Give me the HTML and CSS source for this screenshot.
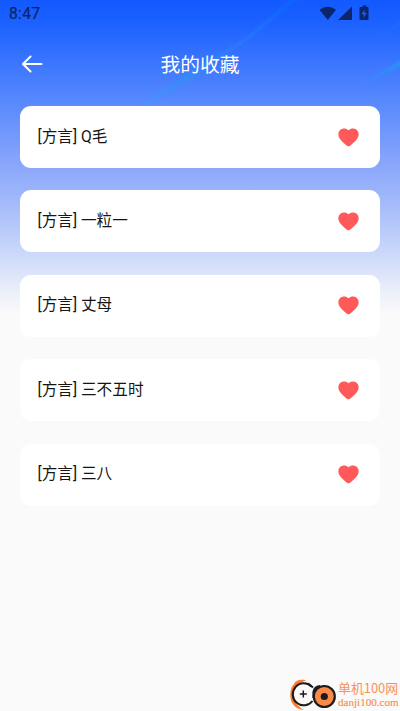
FILE: index.html
```html
<!DOCTYPE html>
<html lang="zh-CN">
<head>
<meta charset="utf-8">
<meta name="viewport" content="width=device-width, initial-scale=1">
<title>我的收藏</title>
<link rel="stylesheet" href="styles.css">
</head>
<body>
<svg class="streaks" width="400" height="106" viewBox="0 0 400 106" aria-hidden="true">
  <defs>
    <linearGradient id="fade"><stop offset="0" stop-color="#20a0f5" stop-opacity=".1"/><stop offset=".3" stop-color="#20a0f5" stop-opacity=".38"/><stop offset=".6" stop-color="#20a0f5" stop-opacity=".2"/><stop offset="1" stop-color="#20a0f5" stop-opacity=".12"/></linearGradient>
    <linearGradient id="glow"><stop offset="0" stop-color="#20a0f5" stop-opacity="0"/><stop offset="1" stop-color="#20a0f5" stop-opacity=".6"/></linearGradient>
    <filter id="soft"><feGaussianBlur stdDeviation="1.2"/></filter>
  </defs>
  <g filter="url(#soft)">
    <path fill="url(#fade)" d="M136 106 L190 72 L246 37 L292 -2 L299 -2 L251 38 L196 76 L146 106Z"/>
    <path fill="url(#glow)" d="M360 84 L402 59 V66 L365 84Z"/>
    <path fill="url(#glow)" opacity=".3" d="M355 3 L366 -2 H376 L345 12Z M375 38 L402 20 V24Z"/>
  </g>
</svg>
<header class="status">
  <span class="time">8:47</span>
  <svg class="signals" width="52" height="16" viewBox="0 0 52 16" fill="#0d2569">
    <path d="M.5 3.7 Q8.8 -2.4 17 3.7 L8.8 14Z"/>
    <path d="M33 .5 V14 H19Z"/>
    <path fill-rule="evenodd" d="M42.3 1 H43.7 V-.5 H47.3 V1 H48.7 Q49.5 1 49.5 1.8 V13.2 Q49.5 14 48.7 14 H41.3 Q40.5 14 40.5 13.2 V1.8 Q40.5 1 41.3 1Z M45.5 3.5 L42.5 8.2 H44.7 V12 L47.6 7 H45.5Z"/>
  </svg>
</header>
<nav class="bar">
  <svg class="back" width="22" height="20" viewBox="0 0 22 20" fill="none" stroke="#fff" stroke-width="2" stroke-linecap="round" stroke-linejoin="round"><path d="M19.5 10 H1.5 M8.5 2.5 L1 10 L8.5 17.5"/></svg>
  <h1>我的收藏</h1>
</nav>
<main class="list">
  <article class="card"><span>[方言] Q毛</span><svg class="heart" viewBox="0 0 21 19"><path d="M10.5 2.3 C13 .1 16.5 -.1 18.9 2.1 C21.3 4.4 21.2 8.1 18.8 11.2 C16.8 13.9 13.6 16.6 11.7 17.9 Q10.5 18.8 9.3 17.9 C7.4 16.6 4.2 13.9 2.2 11.2 C-.2 8.1 -.3 4.4 2.1 2.1 C4.5 -.1 8 .1 10.5 2.3Z"/></svg></article>
  <article class="card"><span>[方言] 一粒一</span><svg class="heart" viewBox="0 0 21 19"><path d="M10.5 2.3 C13 .1 16.5 -.1 18.9 2.1 C21.3 4.4 21.2 8.1 18.8 11.2 C16.8 13.9 13.6 16.6 11.7 17.9 Q10.5 18.8 9.3 17.9 C7.4 16.6 4.2 13.9 2.2 11.2 C-.2 8.1 -.3 4.4 2.1 2.1 C4.5 -.1 8 .1 10.5 2.3Z"/></svg></article>
  <article class="card"><span>[方言] 丈母</span><svg class="heart" viewBox="0 0 21 19"><path d="M10.5 2.3 C13 .1 16.5 -.1 18.9 2.1 C21.3 4.4 21.2 8.1 18.8 11.2 C16.8 13.9 13.6 16.6 11.7 17.9 Q10.5 18.8 9.3 17.9 C7.4 16.6 4.2 13.9 2.2 11.2 C-.2 8.1 -.3 4.4 2.1 2.1 C4.5 -.1 8 .1 10.5 2.3Z"/></svg></article>
  <article class="card"><span>[方言] 三不五时</span><svg class="heart" viewBox="0 0 21 19"><path d="M10.5 2.3 C13 .1 16.5 -.1 18.9 2.1 C21.3 4.4 21.2 8.1 18.8 11.2 C16.8 13.9 13.6 16.6 11.7 17.9 Q10.5 18.8 9.3 17.9 C7.4 16.6 4.2 13.9 2.2 11.2 C-.2 8.1 -.3 4.4 2.1 2.1 C4.5 -.1 8 .1 10.5 2.3Z"/></svg></article>
  <article class="card"><span>[方言] 三八</span><svg class="heart" viewBox="0 0 21 19"><path d="M10.5 2.3 C13 .1 16.5 -.1 18.9 2.1 C21.3 4.4 21.2 8.1 18.8 11.2 C16.8 13.9 13.6 16.6 11.7 17.9 Q10.5 18.8 9.3 17.9 C7.4 16.6 4.2 13.9 2.2 11.2 C-.2 8.1 -.3 4.4 2.1 2.1 C4.5 -.1 8 .1 10.5 2.3Z"/></svg></article>
</main>
<footer class="mark">
  <svg width="48" height="33" viewBox="0 0 48 33" fill="none">
    <path d="M16 1.2 C9 0 5 2 4 5 C1 8 0 13 .4 18 C1 25 6 30.5 14 31 C8 27.5 4 23 4 16 C4 9 9 4 16 1.2Z" fill="#f97d32"/>
    <path d="M21.5 7.5 A11 11 0 1 0 22.5 22" stroke="#1f1a1b" stroke-width="2"/>
    <path d="M18 4.5 L23 8.5" stroke="#1f1a1b" stroke-width="2"/>
    <circle cx="34.3" cy="17.5" r="10.5" fill="#f98a48" stroke="#1f1a1b" stroke-width="2.2"/>
    <path d="M23.5 19 V13 Q24 8 30 7" stroke="#1f1a1b" stroke-width="2.2"/>
    <circle cx="34.3" cy="17.5" r="3.6" fill="#1f1a1b"/>
    <path d="M13.3 11.5 V18.5 M9.8 15 H16.8" stroke="#1f1a1b" stroke-width="1.5"/>
  </svg>
  <div class="mark-text"><b>单机100网</b><small>danji100.com</small></div>
</footer>
</body>
</html>
```
FILE: styles.css
```css
* { box-sizing: border-box; }
body {
  margin: 0;
  height: 711px;
  display: flex;
  flex-direction: column;
  position: relative;
  overflow: hidden;
  font-family: Roboto, "Noto Sans CJK SC", sans-serif;
  background: linear-gradient(#1259ff 0, #1a60ff 20px, #5788fd 100px, #8ca8fb 168px, #9ab3fb 190px, #d0dcf9 260px, #e8edf9 288px, #fafafa 314px);
}
.streaks { position: absolute; top: 0; left: 0; }
.status {
  position: relative;
  height: 28px;
  flex: none;
  display: flex;
  justify-content: space-between;
  padding: 6px 29px 0 9px;
}
.time { font-size: 15.6px; line-height: 17px; font-weight: 400; letter-spacing: .3px; color: #0d2560; -webkit-text-stroke: .2px #0d2560; }
.signals { overflow: visible; }
.bar {
  position: relative;
  height: 78px;
  flex: none;
  display: grid;
  grid-template-columns: 22px 1fr 22px;
  align-items: center;
  padding: 0 22px 6px;
}
h1 { margin: 4px 0 0; text-align: center; color: #fff; font-size: 19.8px; line-height: 28px; font-weight: 400; }
.list { display: flex; flex-direction: column; gap: 22.45px; padding: 0 20px; }
.card {
  height: 62px;
  display: flex;
  align-items: center;
  justify-content: space-between;
  padding: 0 21px 1px 17.5px;
  border-radius: 11px;
  background: #fff;
  color: #151515;
  font-size: 15.65px;
  line-height: 24px;
}
.heart { width: 21px; height: 19px; margin-top: 1px; fill: #ff5959; }
.mark { margin: auto 1px 0 0; display: flex; align-self: flex-end; align-items: flex-start; height: 32px; color: #f99355; }
.mark-text { font-family: "Liberation Serif", "Noto Sans CJK SC", serif; width: 61px; padding-top: 1px; white-space: nowrap; }
.mark-text b { display: block; font: 12.9px/16px "Noto Sans CJK SC", sans-serif; }
.mark-text small { display: block; font-size: 11.1px; line-height: 12px; -webkit-text-stroke: .2px #f99355; }
```
